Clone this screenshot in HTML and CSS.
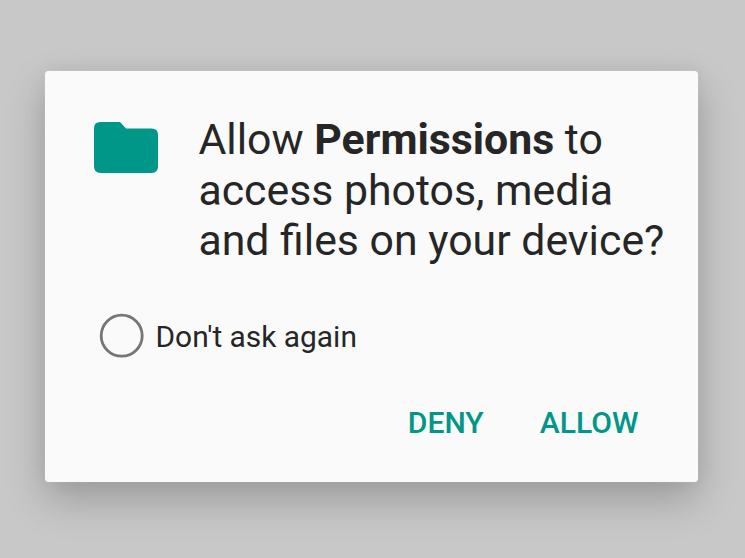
FILE: index.html
```
<!DOCTYPE html>
<html lang="en">
<head>
<meta charset="utf-8">
<title>Permission request</title>
<link rel="stylesheet" href="styles.css">
</head>
<body>
<main class="dialog" role="dialog">
  <div class="message">
    <svg class="folder" viewBox="0 0 64 51" width="64" height="51"><path d="M6.400 0H26L32 6.400H57.600Q64 6.400 64 12.800V44.600Q64 51 57.600 51H6.400Q0 51 0 44.600V6.400Q0 0 6.400 0Z"/></svg>
    <h1 class="title">Allow <b>Permissions</b> to<br>access photos, media<br>and files on your device?</h1>
  </div>
  <label class="option"><svg class="circle" viewBox="0 0 44 44" width="44" height="44"><circle cx="21.700" cy="22.700" r="20.500"/></svg><span class="label">Don't ask again</span></label>
  <div class="actions"><button>DENY</button><button>ALLOW</button></div>
</main>
</body>
</html>
```
FILE: styles.css
```
* { box-sizing: border-box; }
body {
  margin: 0;
  height: 558px;
  overflow: hidden;
  padding: 70.5px 47px 0 45px;
  background: #c8c8c8;
  font-family: Roboto, sans-serif;
  color: #262626;
}
.dialog {
  height: 411px;
  padding: 43.5px 0 0 49px;
  border-radius: 4px;
  background: #fafafa;
  box-shadow: 0 0 1px rgba(255,255,255,.5), 0 18px 40px rgba(0,0,0,.22), 0 0 20px rgba(0,0,0,.05);
}
.message { display: flex; gap: 40.4px; }
.folder { margin-top: 8px; fill: #009688; flex: none; }
.title { margin: 0; font-size: 42.8px; line-height: 50.5px; font-weight: 400; white-space: nowrap; }
.title b { font-weight: 700; }
.option { display: flex; align-items: center; gap: 12px; margin: 47.5px 0 0 5.5px; height: 44px; font-size: 29.9px; }
.circle { fill: none; stroke: #757575; stroke-width: 2.8; overflow: visible; }
.label { padding-top: 2px; }
.actions { display: flex; justify-content: flex-end; gap: 56px; margin-top: 47.5px; padding-right: 59.5px; }
button { border: 0; padding: 0; background: none; color: #009688; font: 500 30.1px/36px Roboto, sans-serif; }
```
